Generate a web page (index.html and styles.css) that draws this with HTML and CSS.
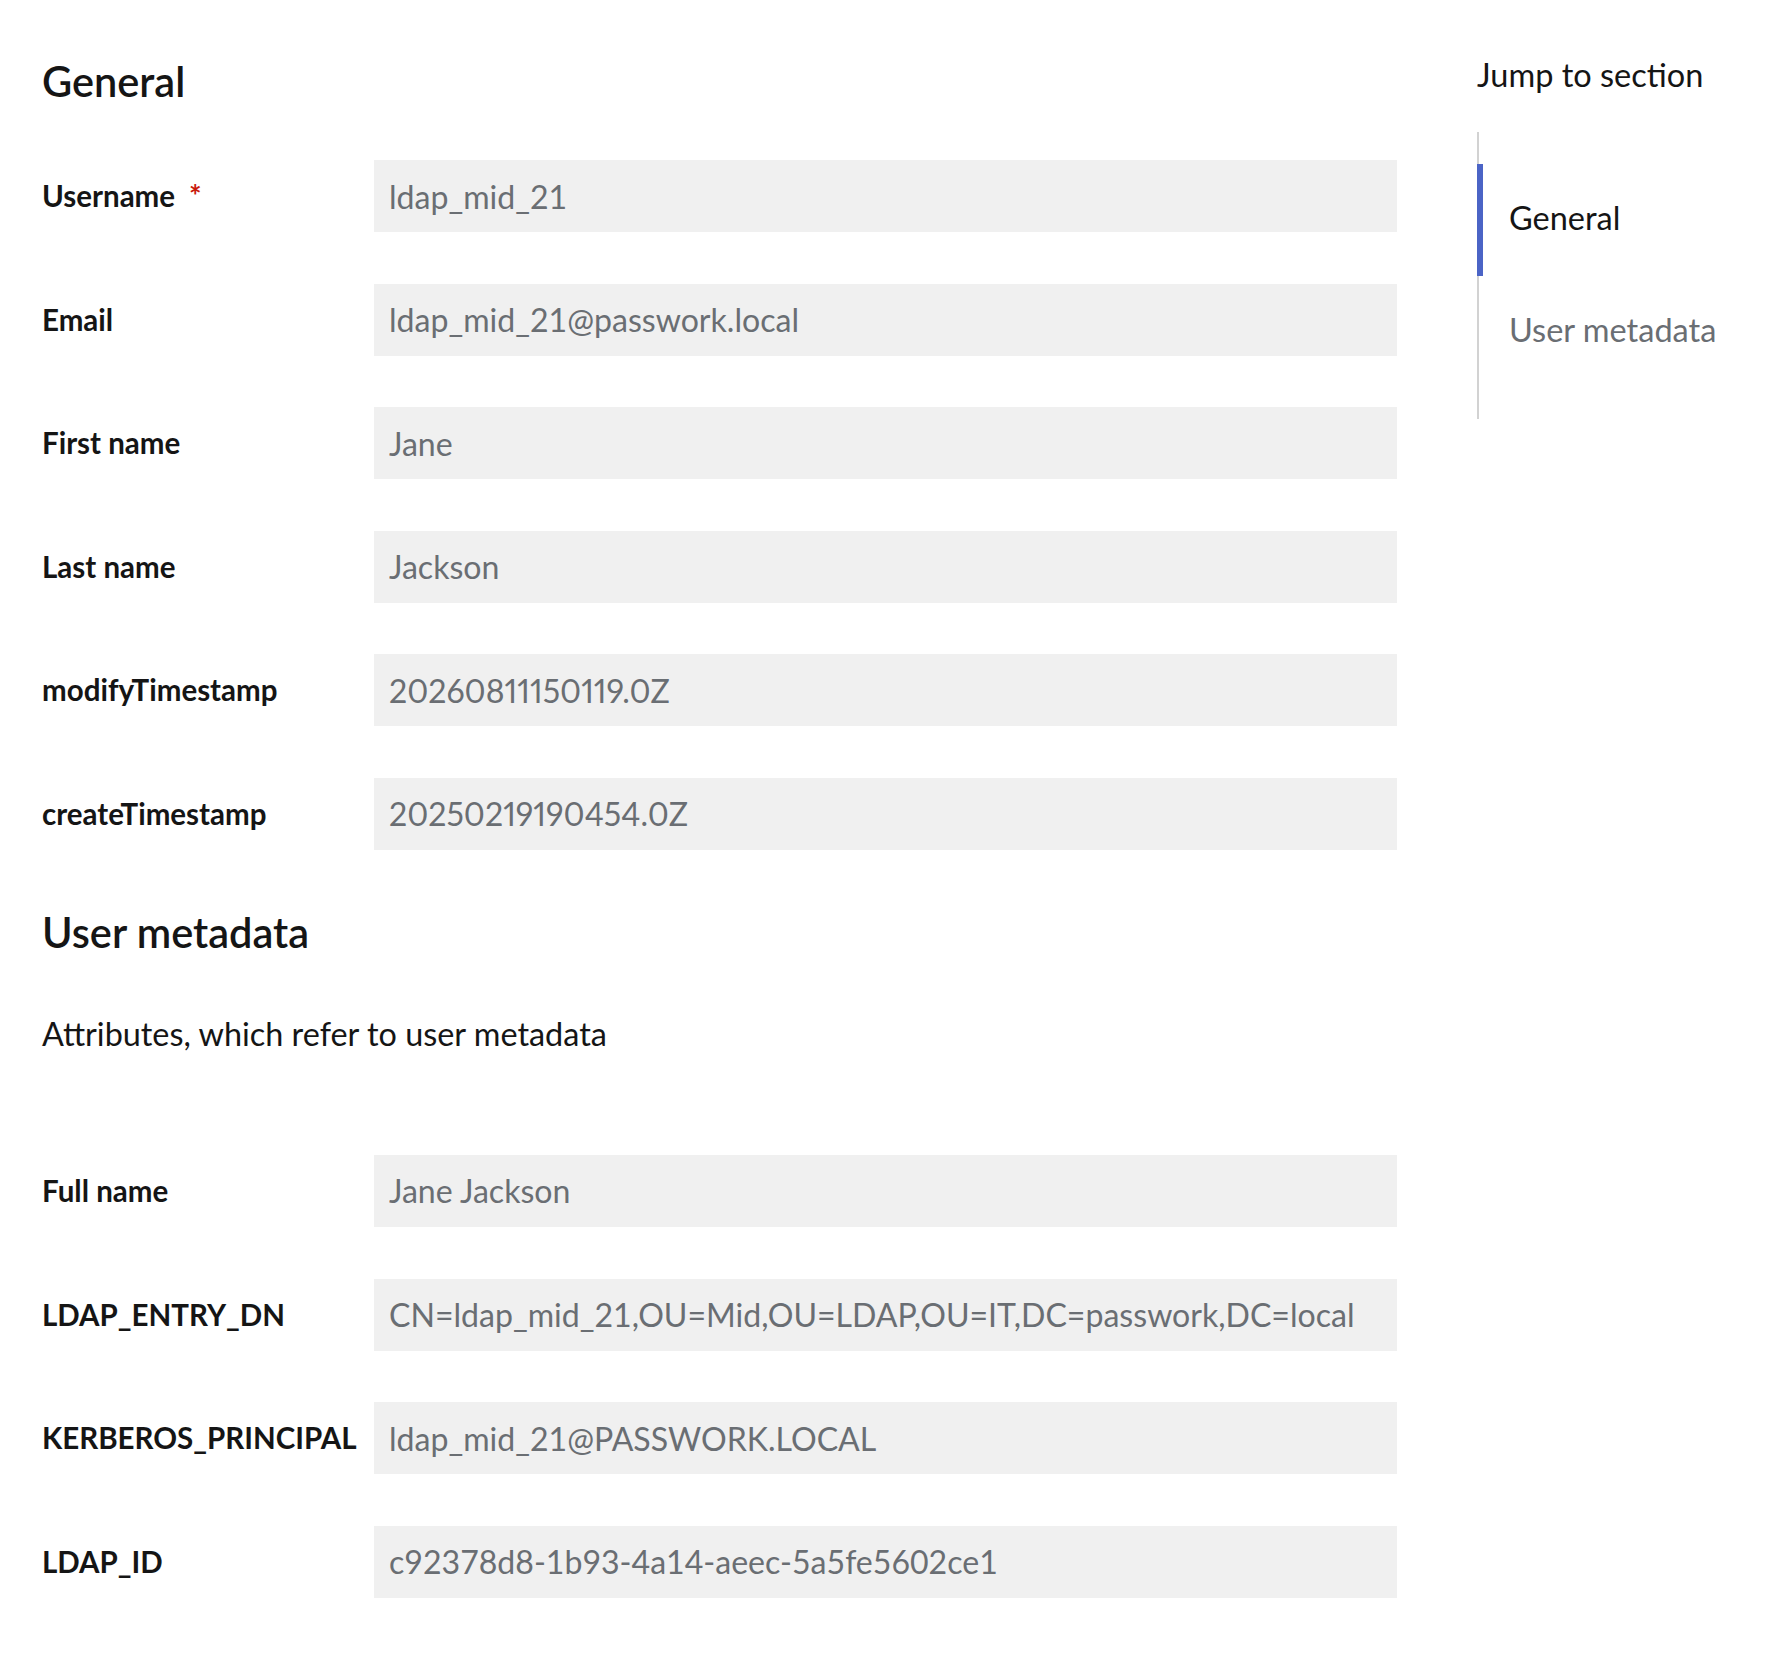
FILE: index.html
```html
<!DOCTYPE html>
<html lang="en">
  <head>
    <meta charset="UTF-8" />
    <meta name="viewport" content="width=device-width, initial-scale=1.0" />
    <title>User details</title>
    <link rel="stylesheet" href="styles.css">
  </head>
  <body>
    <div class="page">
      <div class="content">
        <section id="general">
          <h2 class="section-title">General</h2>
          <div class="form-group">
            <label for="username">Username<span class="required">*</span></label>
            <input type="text" id="username" value="ldap_mid_21" readonly />
          </div>
          <div class="form-group">
            <label for="email">Email</label>
            <input type="text" id="email" value="ldap_mid_21@passwork.local" readonly />
          </div>
          <div class="form-group">
            <label for="firstName">First name</label>
            <input type="text" id="firstName" value="Jane" readonly />
          </div>
          <div class="form-group">
            <label for="lastName">Last name</label>
            <input type="text" id="lastName" value="Jackson" readonly />
          </div>
          <div class="form-group">
            <label for="modifyTimestamp">modifyTimestamp</label>
            <input type="text" id="modifyTimestamp" class="timestamp" value="20260811150119.0Z" readonly />
          </div>
          <div class="form-group">
            <label for="createTimestamp">createTimestamp</label>
            <input type="text" id="createTimestamp" class="timestamp" value="20250219190454.0Z" readonly />
          </div>
        </section>

        <section id="user-metadata">
          <h2 class="section-title meta-title">User metadata</h2>
          <p class="section-desc">Attributes, which refer to user metadata</p>
          <div class="form-group">
            <label for="fullName">Full name</label>
            <input type="text" id="fullName" value="Jane Jackson" readonly />
          </div>
          <div class="form-group">
            <label for="ldapEntryDn">LDAP_ENTRY_DN</label>
            <input type="text" id="ldapEntryDn" value="CN=ldap_mid_21,OU=Mid,OU=LDAP,OU=IT,DC=passwork,DC=local" readonly />
          </div>
          <div class="form-group">
            <label for="kerberos">KERBEROS_PRINCIPAL</label>
            <input type="text" id="kerberos" value="ldap_mid_21@PASSWORK.LOCAL" readonly />
          </div>
          <div class="form-group">
            <label for="ldapId">LDAP_ID</label>
            <input type="text" id="ldapId" value="c92378d8-1b93-4a14-aeec-5a5fe5602ce1" readonly />
          </div>
        </section>
      </div>

      <!-- jump links -->
      <nav class="jump-links">
        <div class="jump-title">Jump to section</div>
        <ul class="jump-list">
          <li class="jump-item active"><a href="#general">General</a></li>
          <li class="jump-item"><a href="#user-metadata">User metadata</a></li>
        </ul>
      </nav>
    </div>
  </body>
</html>
```

FILE: styles.css
```css
body {
  margin: 0;
  font-family: Lato, "Liberation Sans", sans-serif;
  color: #151515;
  background-color: white;
}
.page {
  display: flex;
  align-items: flex-start;
  padding-left: 42px;
}
.content {
  width: 1355px;
  padding-top: 54.5px;
  padding-bottom: 60px;
}

/* !--- FORM ------ */
.section-title {
  margin: 0 0 53.5px;
  font-size: 41.5px;
  line-height: 52px;
  font-weight: 600;
}
.meta-title {
  margin-top: 55.8px;
  margin-bottom: 51.8px;
}
.section-desc {
  margin: 0 0 97.4px;
  font-size: 32.4px;
  line-height: 48px;
}
.form-group {
  display: grid;
  grid-template-columns: 300px 1fr;
  column-gap: 32px;
  align-items: center;
  height: 72px;
  margin-bottom: 51.6px;
}
.form-group:last-child {
  margin-bottom: 0;
}
.form-group label {
  font-size: 29.5px;
  line-height: 42px;
  font-weight: 700;
  white-space: nowrap;
}
.required {
  margin-left: 14px;
  color: #c9190b;
}
.form-group input {
  height: 72px;
  box-sizing: border-box;
  border: none;
  outline: none;
  padding: 0 15px;
  background-color: #f0f0f0;
  color: #6a6e73;
  font-family: inherit;
  font-size: 32.1px;
}
.form-group input.timestamp {
  font-variant-numeric: proportional-nums;
}

/* !--- JUMP LINKS ------ */
.jump-links {
  margin-left: 80px;
  padding-top: 51px;
}
.jump-title {
  font-size: 32.5px;
  line-height: 48px;
  margin-bottom: 33px;
}
.jump-list {
  list-style: none;
  margin: 0;
  padding: 32px 0 31px;
  border-left: 2px solid #d2d2d2;
}
.jump-item {
  padding: 30px 40px 34px 30px;
  font-size: 32.5px;
  line-height: 48px;
}
.jump-item a {
  color: #6a6e73;
  text-decoration: none;
}
.jump-item.active {
  margin-left: -2px;
  border-left: 6px solid #4b64c6;
  padding-left: 26px;
}
.jump-item.active a {
  color: #151515;
}
```
